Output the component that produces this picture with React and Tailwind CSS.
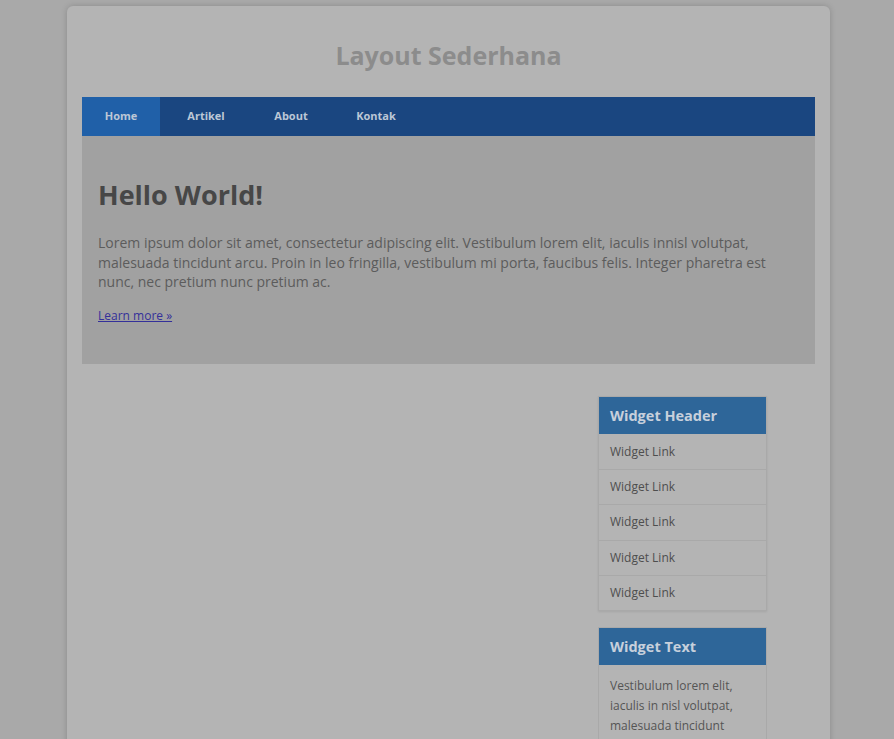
import React from 'react';

const navItems = ['Home', 'Artikel', 'About', 'Kontak'];

const App = () => {
  return (
    <div className="h-screen bg-[#a9a9a9] pt-[6px] font-['Open_Sans',sans-serif] overflow-hidden">
      <div className="ml-[67px] w-[763px] min-h-[760px] rounded-t-md bg-[#b4b4b4] shadow-[0_0_6px_rgba(0,0,0,0.18)] px-[15px]">
        {/* Header */}
        <h1 className="pt-[32px] pb-[25px] text-center text-[25px] leading-[34px] font-bold text-[#8c8c8c]">
          Layout Sederhana
        </h1>

        {/* Nav */}
        <nav className="flex gap-[7px] h-[39px] bg-[#1a4680]">
          {navItems.map((item, i) => (
            <a
              key={item}
              href="#"
              className={`flex w-[78px] items-center justify-center text-[11px] font-bold text-[#bcc7d6] ${
                i === 0 ? 'bg-[#2060a8]' : ''
              }`}
            >
              {item}
            </a>
          ))}
        </nav>

        {/* Hero */}
        <div className="h-[228px] bg-[#a1a1a1] px-[16px] pt-[40px]">
          <h2 className="text-[27px] leading-[38px] font-bold text-[#474747]">Hello World!</h2>
          <p className="mt-[19px] text-[14px] leading-[19.5px] text-[#5c5c5c] pr-[20px]">
            Lorem ipsum dolor sit amet, consectetur adipiscing elit. Vestibulum lorem elit, iaculis innisl volutpat,
            malesuada tincidunt arcu. Proin in leo fringilla, vestibulum mi porta, faucibus felis. Integer pharetra est
            nunc, nec pretium nunc pretium ac.
          </p>
          <a href="#" className="mt-[16px] inline-block text-[12px] leading-[16px] text-[#34309a] underline">
            Learn more »
          </a>
        </div>

        {/* Content + sidebar */}
        <div className="flex justify-end pr-[48px] pt-[32px]">
          <aside className="w-[169px] flex flex-col gap-[16px]">
            <div className="border border-[#a9a9a9] shadow-[0_1px_2px_rgba(0,0,0,0.08)]">
              <h3 className="h-[37px] bg-[#2e6699] px-[11px] flex items-center text-[14.5px] font-bold text-[#c7d0dc]">
                Widget Header
              </h3>
              {[1, 2, 3, 4, 5].map((n) => (
                <a
                  key={n}
                  href="#"
                  className="flex h-[35.2px] items-center border-t border-[#a9a9a9] first-of-type:border-t-0 px-[11px] text-[12px] text-[#4e4e4e]"
                >
                  Widget Link
                </a>
              ))}
            </div>

            <div className="border border-[#a9a9a9]">
              <h3 className="h-[37px] bg-[#2e6699] px-[11px] flex items-center text-[14.5px] font-bold text-[#c7d0dc]">
                Widget Text
              </h3>
              <p className="px-[11px] pt-[11px] pb-[12px] text-[12px] leading-[20px] text-[#555555]">
                Vestibulum lorem elit, iaculis in nisl volutpat, malesuada tincidunt arcu. Proin in leo fringilla,
                vestibulum mi porta.
              </p>
            </div>
          </aside>
        </div>
      </div>
    </div>
  );
};

export default App;
